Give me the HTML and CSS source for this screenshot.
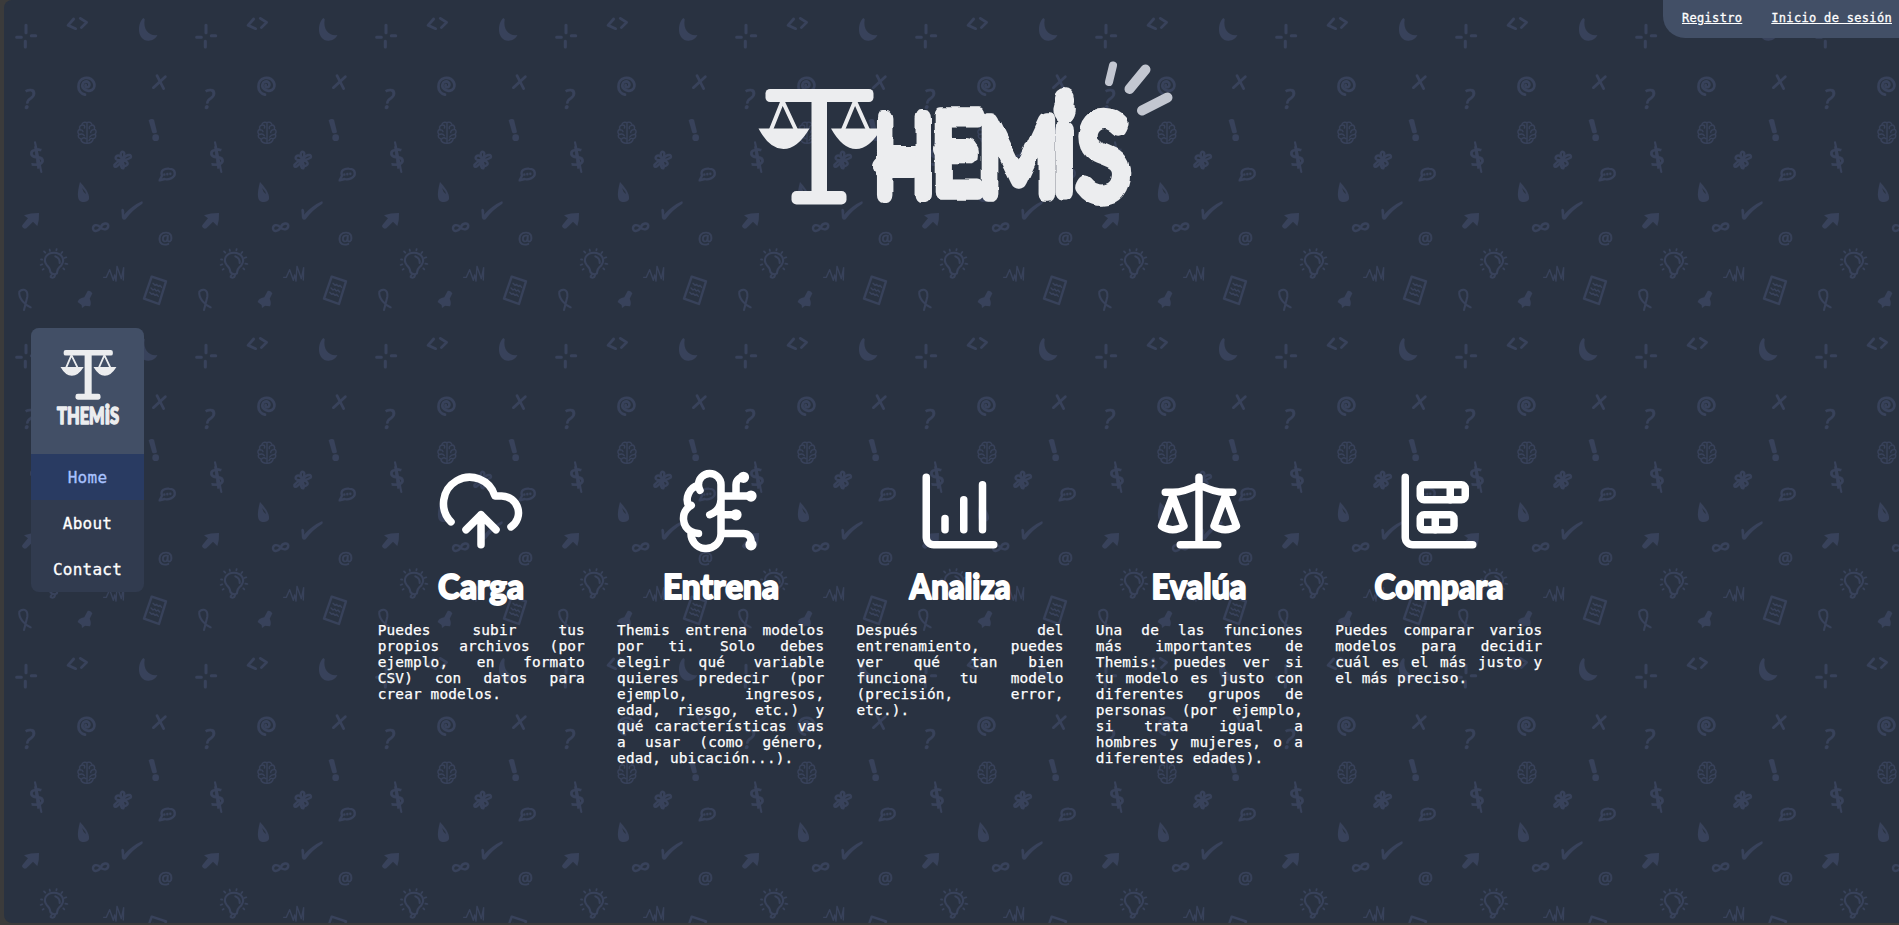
FILE: index.html
```html
<!DOCTYPE html>
<html lang="es">
<head>
<meta charset="utf-8">
<title>Themis</title>
<link rel="stylesheet" href="styles.css">
</head>
<body>
<div class="page">
  <svg class="doodles" aria-hidden="true">
    <defs>
      <pattern id="doodle" width="540" height="960" patternUnits="userSpaceOnUse" patternTransform="translate(-4 0) scale(.33333)">
        <g class="ink">
          <path stroke-width="9" d="M78 76v22M50 112h14M94 107h13M76 124v17"/>
          <path stroke-width="8" d="M221 57L204 76L227 86M241 55L260 67L244 83"/>
          <path class="solid" d="M430 54C410 72 412 122 445 122C458 122 468 115 472 105C450 110 428 92 434 58Z"/>
          <path stroke-width="8" d="M255 284C230 280 228 240 254 234C280 230 292 258 276 270C258 278 240 262 250 248C260 238 274 250 266 260C262 264 254 260 257 255"/>
          <path stroke-width="8" d="M471 227L491 266M496 230L460 263"/>
          <path stroke-width="4" d="M261 368C251 364 245 370 246 375C237 377 238 385 240 387C231 391 233 400 237 402C231 409 238 416 242 416C243 426 251 430 261 430C271 430 278 426 280 416C287 414 290 407 285 402C291 397 288 389 283 387C286 379 280 375 276 375C275 367 267 365 261 368V429M246 375C254 374 256 380 253 384M240 390Q247 388 249 395M238 404Q247 399 253 407M245 417Q252 410 257 416M276 376Q266 377 268 386M283 389Q273 388 272 398M285 404Q274 402 269 411M280 417Q271 412 267 422"/>
          <path class="solid" d="M446 361Q455 354 462 359L471 397Q464 402 457 398Z"/>
          <circle class="solid" cx="467" cy="413" r="10"/>
          <path stroke-width="7" d="M367 478C355 455 370 450 373 460Q374 470 367 478C383 459 397 464 392 473Q384 479 370 480C382 483 388 493 378 497C369 500 368 488 367 482C373 499 373 508 366 504Q360 496 366 482C355 500 342 506 343 495Q350 485 363 480C350 483 342 475 350 468Q358 462 366 478"/>
          <path stroke-width="7" d="M479 541L486 527C480 510 495 505 507 506C529 507 529 528 513 535Q502 540 494 537Z"/>
          <path stroke-width="7" d="M493 523v1M502 522v1M511 521v1"/>
          <path class="solid" fill-rule="evenodd" d="M240 546C236 563 229 590 239 602C247 609 263 607 267 597C270 580 251 558 240 546ZM246 564Q260 576 257 582Q249 576 246 564Z"/>
          <path class="solid" d="M364 629Q371 622 373 635L372 644Q398 616 426 604Q430 605 427 611Q394 632 377 658Q369 662 366 654Z"/>
          <path class="solid" d="M72 646Q92 639 117 639Q118 660 112 678L99 665L79 685Q73 689 68 682Q64 678 68 674L84 655Z"/>
          <path stroke-width="7" d="M301 682C292 671 279 675 279 685C280 698 296 694 302 682C308 667 323 668 325 677C324 691 309 691 301 682"/>
          <path stroke-width="6" d="M151 816Q150 804 140 795C127 777 140 758 162 758C184 758 197 778 184 796Q171 806 171 820Q160 827 151 816ZM154 826Q148 833 158 833Q164 833 165 825M166 769Q180 774 179 789"/>
          <path stroke-width="5" d="M132 754l4 4M149 749l1 4M170 747l-1 4M187 756l-3 4M199 772l-6 2M202 792l-6-1M193 808l-3-3M131 807l-3 2M122 795l5-2M123 778l4 1"/>
          <path stroke-width="4" d="M311 832H319L329 809L340 841L344 825L348 843L351 799L364 836L371 803L370 840"/>
          <path stroke-width="7" d="M455 830L498 844L477 912L432 896Z"/>
          <path stroke-width="4" d="M459 850l6 6l5-3l5 6l5-3l5 6M453 864l6 6l5-3l5 6l5-3l5 6M449 877l6 6l5-3l5 6l5-3l5 6"/>
          <path stroke-width="6" d="M72 930L82 890C84 865 66 866 58 875C55 895 75 915 92 922"/>
          <path class="solid" d="M263 873Q271 870 277 880L269 896Q275 909 270 919L255 917L246 924L245 915L233 906Q235 896 253 892Z"/>
          <path stroke-width="6" d="M105 427L124 516"/>
        </g>
        <g class="signs">
          <text class="sign-q" x="69" y="326">?</text>
          <text class="sign-d" transform="translate(92 503) rotate(-8)">$</text>
          <text class="sign-at" x="474" y="733">@</text>
        </g>
      </pattern>
    </defs>
    <rect width="100%" height="100%" fill="url(#doodle)"/>
  </svg>

  <nav class="account">
    <a href="#">Registro</a>
    <a href="#">Inicio de sesión</a>
  </nav>

  <aside class="sidebar">
    <div class="brand">
      <svg width="64" height="90" viewBox="0 0 64 90" role="img" aria-label="Themis">
        <use href="#balance" transform="translate(4.500 2) scale(.455 .43)"/>
        <text class="brand-name" x="1" y="76" textLength="62" lengthAdjust="spacingAndGlyphs">THEM<tspan class="tall">i</tspan>S</text>
      </svg>
    </div>
    <a class="item active" href="#">Home</a>
    <a class="item" href="#">About</a>
    <a class="item" href="#">Contact</a>
  </aside>

  <main class="content">
    <h1 class="logo">
      <svg width="450" height="180" viewBox="0 0 450 180">
        <defs>
          <filter id="rough" x="-5%" y="-5%" width="110%" height="110%" color-interpolation-filters="sRGB">
            <feTurbulence type="fractalNoise" baseFrequency=".07" numOctaves="1" seed="4"/>
            <feDisplacementMap in="SourceGraphic" scale="6" xChannelSelector="R" yChannelSelector="G" result="bent"/>
            <feGaussianBlur in="bent" stdDeviation=".4"/>
          </filter>
        </defs>
        <g transform="translate(18.500 49)">
          <g id="balance" fill="#ecedef">
            <rect x="7" y="0" width="108" height="13" rx="4.500"/>
            <rect x="53" y="5" width="15.500" height="105"/>
            <rect x="33" y="102" width="55" height="13.500" rx="5"/>
            <path fill="none" stroke="#ecedef" stroke-width="4" d="M12 42L24 12L38 42M84 42L96.500 12L110 42"/>
            <path d="M0 39.500H51Q39 60 25 60Q11 60 0 39.500ZM72.500 39.500H123Q111 60 97.500 60Q84 60 72.500 39.500Z"/>
          </g>
        </g>
        <g class="letters" filter="url(#rough)">
          <text transform="translate(134.500 155) scale(.71 .99)">H</text>
          <text transform="translate(192 152) scale(.79 .98)">E</text>
          <text transform="translate(239 154) scale(.79 .96)">M</text>
          <text transform="translate(314 152) scale(.83 1.120)">i</text>
          <text transform="translate(338 157) scale(.86 1.030)">S</text>
          <path d="M144 127h30M204 109h22" stroke-width="22"/>
          <path d="M325 58v4" stroke-width="20"/>
        </g>
        <path class="rays" d="M373 25.500L369 42"/>
        <path class="rays wide" d="M405.500 29.500L389.500 49M427.500 57.500L402 70.500"/>
      </svg>
    </h1>

    <section class="features">
      <article class="feature">
        <svg class="icon" viewBox="0 0 24 24"><path d="M12 13v8M4 14.899A7 7 0 1 1 15.710 8h1.790a4.500 4.500 0 0 1 2.500 8.242M8 17l4-4 4 4"/></svg>
        <h2><svg width="120" height="52"><text x="17" y="38" textLength="86" lengthAdjust="spacingAndGlyphs">Carga</text></svg></h2>
        <p>Puedes subir tus propios archivos (por ejemplo, en formato CSV) con datos para crear modelos.</p>
      </article>
      <article class="feature">
        <svg class="icon" viewBox="0 0 24 24"><path d="M12 5a3 3 0 1 0-5.997.125 4 4 0 0 0-2.526 5.770 4 4 0 0 0 .556 6.588A4 4 0 1 0 12 18ZM9 13a4.500 4.500 0 0 0 3-4M6.003 5.125A3 3 0 0 0 6.401 6.500M3.477 10.896a4 4 0 0 1 .585-.396M6 18a4 4 0 0 1-1.967-.516M12 13h4M12 18h6a2 2 0 0 1 2 2v1M12 8h8M16 8V5a2 2 0 0 1 2-2"/><circle cx="16" cy="13" r=".5"/><circle cx="18" cy="3" r=".5"/><circle cx="20" cy="21" r=".5"/><circle cx="20" cy="8" r=".5"/></svg>
        <h2><svg width="140" height="52"><text x="12" y="38" textLength="116" lengthAdjust="spacingAndGlyphs">Entrena</text></svg></h2>
        <p>Themis entrena modelos por ti. Solo debes elegir qué variable quieres predecir (por ejemplo, ingresos, edad, riesgo, etc.) y qué características vas a usar (como género, edad, ubicación...).</p>
      </article>
      <article class="feature">
        <svg class="icon" viewBox="0 0 24 24"><path d="M13 17V9M18 17V5M3 3v16a2 2 0 0 0 2 2h16M8 17v-3"/></svg>
        <h2><svg width="120" height="52"><text x="9.500" y="38" textLength="101" lengthAdjust="spacingAndGlyphs">Analiza</text></svg></h2>
        <p>Después del entrenamiento, puedes ver qué tan bien funciona tu modelo (precisión, error, etc.).</p>
      </article>
      <article class="feature">
        <svg class="icon" viewBox="0 0 24 24"><path d="M16 16l3-8 3 8c-.870.650-1.920 1-3 1s-2.130-.350-3-1ZM2 16l3-8 3 8c-.870.650-1.920 1-3 1s-2.130-.350-3-1ZM7 21h10M12 3v18M3 7h2c2 0 5-1 7-2 2 1 5 2 7 2h2"/></svg>
        <h2><svg width="120" height="52"><text x="12.500" y="38" textLength="95" lengthAdjust="spacingAndGlyphs">Evalúa</text></svg></h2>
        <p>Una de las funciones más importantes de Themis: puedes ver si tu modelo es justo con diferentes grupos de personas (por ejemplo, si trata igual a hombres y mujeres, o a diferentes edades).</p>
      </article>
      <article class="feature">
        <svg class="icon" viewBox="0 0 24 24"><path d="M11 13v4M15 5v4M3 3v16a2 2 0 0 0 2 2h16"/><rect x="7" y="13" width="9" height="4" rx="1"/><rect x="7" y="5" width="12" height="4" rx="1"/></svg>
        <h2><svg width="150" height="52"><text x="10.500" y="38" textLength="129" lengthAdjust="spacingAndGlyphs">Compara</text></svg></h2>
        <p>Puedes comparar varios modelos para decidir cuál es el más justo y el más preciso.</p>
      </article>
    </section>
  </main>
</div>
</body>
</html>
```
FILE: styles.css
```css
* { box-sizing: border-box; }

body {
  margin: 0;
  height: 925px;
  overflow: hidden;
  padding: 0 0 2px 4px;
  background: #3b3b3b;
  font-family: "DejaVu Sans Mono", monospace;
  color: #fff;
}

.page {
  position: relative;
  height: 923px;
  overflow: hidden;
  background: #293241;
  border-radius: 8px 0 0 8px;
}

.doodles {
  position: absolute;
  inset: 0;
  width: 100%;
  height: 100%;
}

.ink {
  fill: none;
  stroke: #38425b;
  stroke-linecap: round;
  stroke-linejoin: round;
}
.ink .solid { fill: #38425b; stroke: none; }

.signs { fill: #38425b; stroke: #38425b; stroke-width: 2; }
.sign-q { font: italic 80px "Open Sans", sans-serif; }
.sign-d { font: 80px "Open Sans", sans-serif; }
.sign-at { font: 50px "Open Sans", sans-serif; stroke-width: 2; }

.account {
  position: absolute;
  top: 0;
  right: 0;
  width: 236px;
  height: 38px;
  display: flex;
  justify-content: flex-end;
  align-items: center;
  gap: 29px;
  padding: 0 7px 2px 0;
  background: #424f66;
  border-bottom-left-radius: 22px;
}
.account a {
  color: #fff;
  font-size: 12px;
  line-height: 16px;
  letter-spacing: .32px;
  -webkit-text-stroke: .3px #fff;
  text-underline-offset: 1px;
}

.sidebar {
  position: absolute;
  left: 27px;
  top: 328px;
  width: 113px;
  border-radius: 8px;
  overflow: hidden;
  background: #313b4f;
}
.brand {
  height: 126px;
  display: flex;
  justify-content: center;
  padding-top: 20px;
  background: #424f66;
}
.brand-name {
  font: 900 22px Lato, sans-serif;
  fill: #ecedef;
  stroke: #ecedef;
  stroke-width: 1.500px;
  stroke-linejoin: round;
}
.brand-name .tall { font-size: 27px; }
.item {
  display: flex;
  height: 46px;
  align-items: center;
  justify-content: center;
  color: #fff;
  font-size: 16px;
  letter-spacing: .25px;
  -webkit-text-stroke: .3px currentColor;
  text-decoration: none;
}
.item.active { background: #293b62; color: #a8c2ff; }

.content { position: relative; }
.logo {
  display: flex;
  margin: 0;
  padding: 40px 0 0 736px;
  height: 466px;
}
.letters {
  font: 300 110px Lato, sans-serif;
  fill: #ecedef;
  stroke: #ecedef;
  stroke-width: 16;
  stroke-linejoin: round;
  stroke-linecap: round;
}
.rays {
  fill: none;
  stroke: #c3c7d1;
  stroke-width: 8;
  stroke-linecap: round;
}
.rays.wide { stroke-width: 10; }

.features {
  display: grid;
  grid-template-columns: repeat(5, 207.200px);
  gap: 32.200px;
  padding-left: 373.700px;
}
.feature {
  display: flex;
  flex-direction: column;
  align-items: center;
}
.icon {
  width: 90px;
  height: 90px;
  fill: none;
  stroke: #fff;
  stroke-width: 2;
  stroke-linecap: round;
  stroke-linejoin: round;
}
.feature h2 {
  margin: 5px 0 9px;
  height: 52px;
  font: 900 34px Lato, sans-serif;
}
.feature h2 svg { display: block; }
.feature h2 text {
  fill: #fff;
  stroke: #fff;
  stroke-width: 1.800px;
  stroke-linejoin: round;
}
.feature p {
  margin: 0;
  width: 100%;
  font-size: 14.400px;
  line-height: 16px;
  letter-spacing: .15px;
  text-align: justify;
  -webkit-text-stroke: .25px #fff;
}
```
